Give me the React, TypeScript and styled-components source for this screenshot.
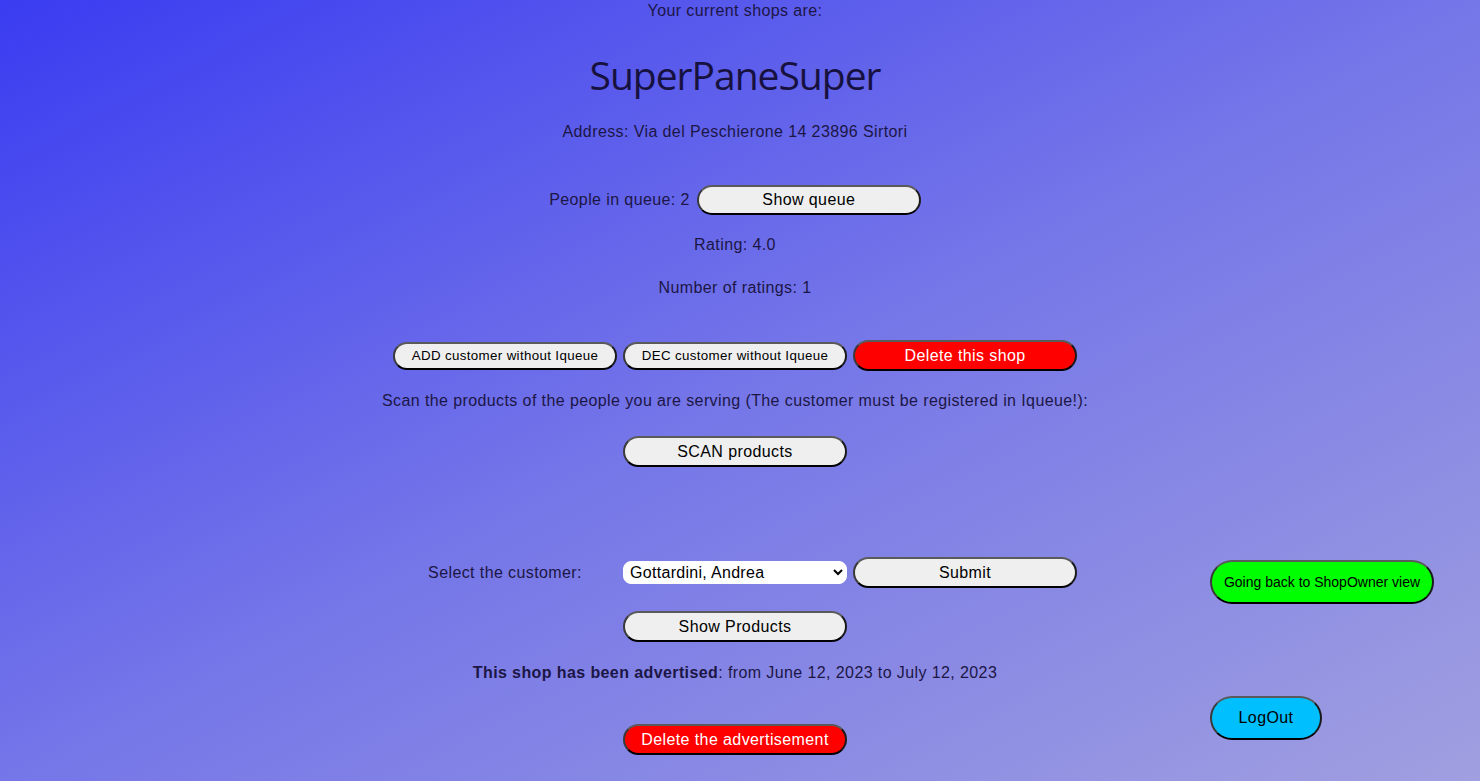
import React from "react";
import styled, { createGlobalStyle } from "styled-components";

const Global = createGlobalStyle`
  html, body { margin: 0; padding: 0; }
  body {
    min-height: 781px;
    background: linear-gradient(to bottom right, #3a3cf1 0%, #7576e8 50%, #a09fe0 100%);
    font-family: "Liberation Sans", Arial, sans-serif;
    color: #1c1646;
    overflow: hidden;
  }
`;

const Page = styled.div`
  display: grid;
  grid-template-columns: 383px 704px 1fr;
  height: 781px;
`;

const Main = styled.main`
  grid-column: 2;
  display: flex;
  flex-direction: column;
  align-items: center;
`;

const Aside = styled.aside`
  grid-column: 3;
  display: flex;
  flex-direction: column;
  align-items: flex-start;
  padding: 560px 0 0 123px;
  gap: 92px;
`;

const Text = styled.p<{ $top: number }>`
  margin: ${(p) => p.$top}px 0 0;
  font-size: 16px;
  line-height: 18px;
  letter-spacing: 0.4px;
  text-align: center;
  white-space: nowrap;
`;

const Title = styled.h1<{ $top: number }>`
  margin: ${(p) => p.$top}px 0 0;
  font-family: "Open Sans", "Noto Sans", sans-serif;
  font-weight: 400;
  font-size: 39px;
  line-height: 54px;
  color: #17113f;
  letter-spacing: -1px;
`;

const Row = styled.div<{ $top: number }>`
  margin-top: ${(p) => p.$top}px;
  display: flex;
  align-items: center;
  justify-content: center;
  gap: 7px;
`;

const Grid3 = styled.div<{ $top: number }>`
  margin-top: ${(p) => p.$top}px;
  display: grid;
  grid-template-columns: repeat(3, 224px);
  gap: 6px;
  align-items: center;
  justify-items: center;
`;

const Label = styled.span`
  font-size: 16px;
  line-height: 18px;
  letter-spacing: 0.4px;
  white-space: nowrap;
`;

type Tone = "plain" | "danger" | "go" | "info";

const bg: Record<Tone, string> = {
  plain: "#efefef",
  danger: "#ff0000",
  go: "#00ff00",
  info: "#00bfff",
};

const spacingFor = (fs: number) => (fs >= 16 ? 0.4 : fs >= 14 ? 0 : 0.35);

const Button = styled.button<{ $tone?: Tone; $w?: number; $h?: number; $fs?: number; $top?: number }>`
  box-sizing: border-box;
  width: ${(p) => p.$w ?? 224}px;
  height: ${(p) => p.$h ?? 31}px;
  margin-top: ${(p) => p.$top ?? 0}px;
  padding: 0 6px;
  border: 2px solid;
  border-color: #5a5a5a #1a1a1a #000 #3a3a3a;
  border-radius: 999px;
  background: ${(p) => bg[p.$tone ?? "plain"]};
  color: ${(p) => (p.$tone === "danger" ? "#ffffff" : "#000000")};
  font-family: "Liberation Sans", Arial, sans-serif;
  font-size: ${(p) => p.$fs ?? 16}px;
  letter-spacing: ${(p) => spacingFor(p.$fs ?? 16)}px;
  white-space: nowrap;
  cursor: pointer;
`;

const Select = styled.select`
  box-sizing: border-box;
  width: 224px;
  height: 23px;
  border: 1px solid #ffffff;
  border-radius: 8px;
  background: #ffffff;
  color: #000;
  font-family: "Liberation Sans", Arial, sans-serif;
  font-size: 16px;
  letter-spacing: 0.3px;
  padding: 0 2px;
`;

export default function App() {
  return (
    <>
      <Global />
      <Page>
        <Main>
          <Text $top={2}>Your current shops are:</Text>
          <Title $top={28}>SuperPaneSuper</Title>
          <Text $top={21}>Address: Via del Peschierone 14 23896 Sirtori</Text>
          <Row $top={44}>
            <Label>People in queue: 2</Label>
            <Button $h={30}>Show queue</Button>
          </Row>
          <Text $top={21}>Rating: 4.0</Text>
          <Text $top={25}>Number of ratings: 1</Text>
          <Grid3 $top={43}>
            <Button $h={28} $fs={13.33}>ADD customer without Iqueue</Button>
            <Button $h={28} $fs={13.33}>DEC customer without Iqueue</Button>
            <Button $tone="danger">Delete this shop</Button>
          </Grid3>
          <Text $top={21}>
            Scan the products of the people you are serving (The customer must be registered in Iqueue!):
          </Text>
          <Button $top={26}>SCAN products</Button>
          <Grid3 $top={90}>
            <Label>Select the customer:</Label>
            <Select defaultValue="ga">
              <option value="ga">Gottardini, Andrea</option>
            </Select>
            <Button>Submit</Button>
          </Grid3>
          <Button $top={23}>Show Products</Button>
          <Text $top={22}>
            <b>This shop has been advertised</b>: from June 12, 2023 to July 12, 2023
          </Text>
          <Button $top={42} $tone="danger">Delete the advertisement</Button>
        </Main>
        <Aside>
          <Button $tone="go" $h={44} $fs={14}>Going back to ShopOwner view</Button>
          <Button $tone="info" $w={112} $h={44}>LogOut</Button>
        </Aside>
      </Page>
    </>
  );
}
